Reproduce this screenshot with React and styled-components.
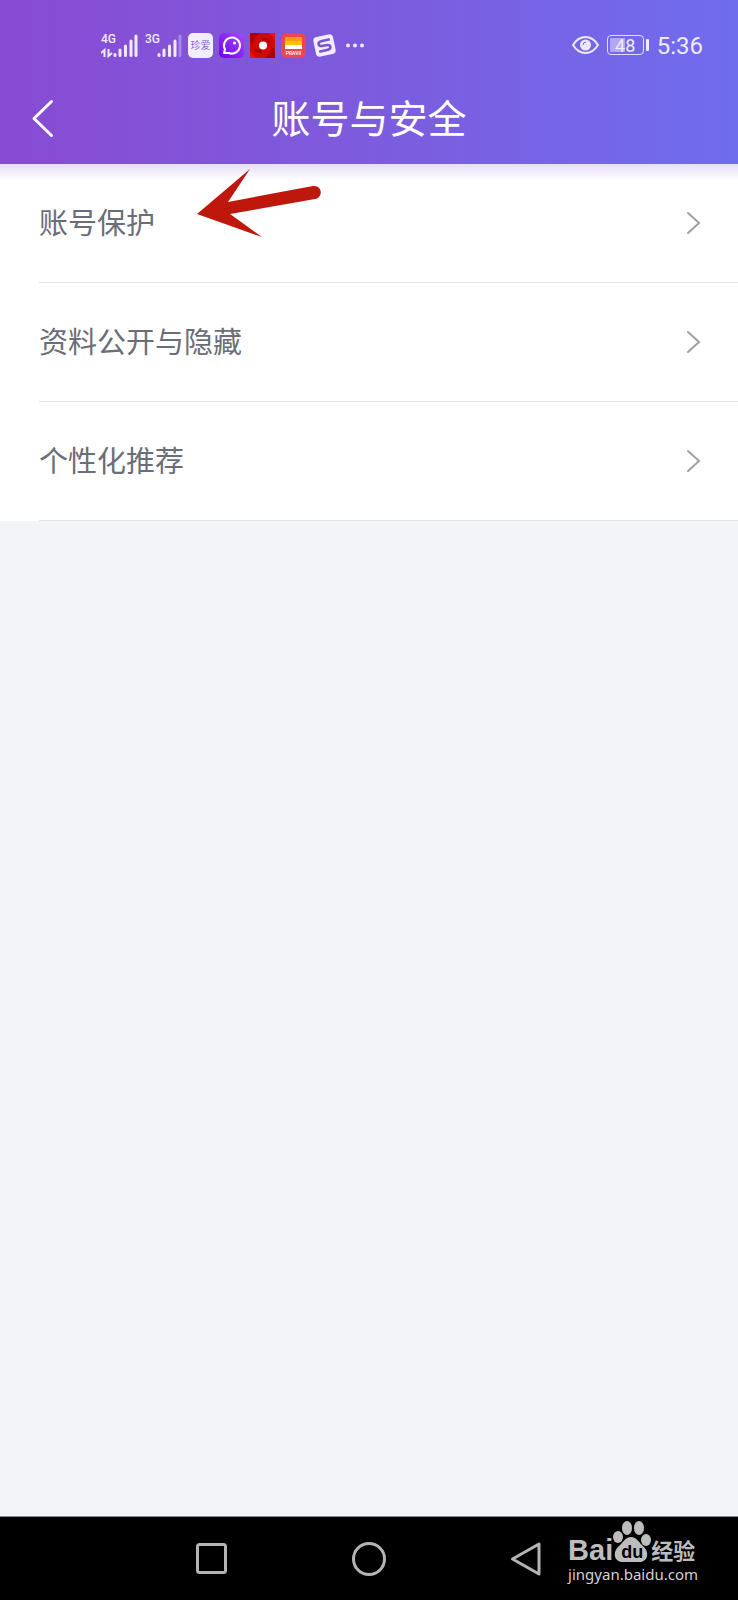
import React from "react";
import styled, { createGlobalStyle } from "styled-components";

const GlobalStyle = createGlobalStyle`
  * { box-sizing: border-box; }
  body {
    margin: 0;
    font-family: Roboto, "Noto Sans CJK SC", sans-serif;
    background: #f3f4f7;
  }
`;

const Page = styled.div`
  display: flex;
  flex-direction: column;
  min-height: 100vh;
`;

const Header = styled.header`
  position: relative;
  background: linear-gradient(90deg, #884bd3 0%, #7e5adc 45%, #706cee 100%);
  color: #fff;
  &::after {
    content: "";
    position: absolute;
    left: 0;
    right: 0;
    top: 100%;
    height: 16px;
    background: linear-gradient(#e5def9, rgba(255, 255, 255, 0));
  }
`;

const StatusBar = styled.div`
  display: flex;
  justify-content: space-between;
  align-items: center;
  height: 74px;
  padding: 16px 35px 0 101px;
  color: #efe9ff;
`;

const StatusGroup = styled.div`
  display: flex;
  align-items: center;
  gap: ${(p) => p.$gap}px;
`;

const Signal = styled.div`
  display: grid;
  width: 37px;
  margin-right: ${(p) => p.$after}px;
  > * {
    grid-area: 1 / 1;
  }
`;

const Network = styled.span`
  font: 500 12px/12px Roboto, sans-serif;
`;

const Svg = styled.svg`
  display: block;
  flex: none;
`;

const AppBadge = styled.span`
  width: 25px;
  height: 25px;
  border-radius: 5px;
  background: #f3eeff;
  color: #8a66d8;
  font-size: 10px;
  line-height: 25px;
  text-align: center;
  white-space: nowrap;
`;

const Battery = styled.div`
  display: flex;
  align-items: center;
  gap: 2px;
  &::after {
    content: "";
    width: 3px;
    height: 12px;
    border-radius: 1px;
    background: #efe9ff;
  }
`;

const BatteryCell = styled.span`
  width: 37px;
  height: 20px;
  border: 1px solid #e4ddff;
  border-radius: 4px;
  background: linear-gradient(90deg, #b3a7f5 48%, transparent 48%) content-box;
  padding: 2px;
  font-size: 18px;
  line-height: 15px;
  text-align: center;
`;

const Clock = styled.time`
  font-size: 24px;
  line-height: 28px;
  padding-top: 2px;
`;

const TitleBar = styled.div`
  display: grid;
  grid-template-columns: 86px 1fr 86px;
  align-items: center;
  height: 90px;
`;

const BackButton = styled.button`
  height: 60px;
  padding: 0 0 0 30px;
  border: 0;
  background: none;
  color: inherit;
`;

const Title = styled.h1`
  margin: 0;
  padding-top: 2px;
  font-size: 39px;
  font-weight: 400;
  line-height: 56px;
  text-align: center;
`;

const Main = styled.main`
  flex: 1;
`;

const List = styled.ul`
  list-style: none;
  margin: 0;
  padding: 0 0 0 39px;
  background: #fff;
`;

const Row = styled.a`
  position: relative;
  display: flex;
  align-items: center;
  justify-content: space-between;
  height: 119px;
  padding-right: 37px;
  border-bottom: 1px solid #e4e4e7;
  color: #6b6d78;
  text-decoration: none;
`;

const RowLabel = styled.span`
  padding-top: 2px;
  font-size: 29px;
  line-height: 40px;
`;

const Pointer = styled.svg`
  position: absolute;
  left: 157px;
  top: 4px;
`;

const NavBar = styled.nav`
  position: relative;
  display: flex;
  height: 84px;
  padding: 0 18%;
  border-top: 1px solid #8b8b8b;
  background: #000;
`;

const NavButton = styled.button`
  flex: 1;
  display: flex;
  align-items: center;
  justify-content: center;
  padding: 0;
  border: 0;
  background: none;
`;

const Watermark = styled.div`
  position: absolute;
  top: 4px;
  right: 40px;
  color: #bdbdbd;
`;

const Brand = styled.div`
  display: flex;
  align-items: flex-end;
  height: 43px;
`;

const BrandLatin = styled.span`
  font: 700 29px/28px "Liberation Sans", sans-serif;
`;

const BrandHan = styled.span`
  font: 700 22px/30px "Noto Sans CJK SC", sans-serif;
`;

const Paw = styled.span`
  display: grid;
  justify-items: center;
  align-items: end;
  > * {
    grid-area: 1 / 1;
  }
`;

const PawText = styled.span`
  color: #000;
  font: 700 18px/24px "Liberation Sans", sans-serif;
`;

const Site = styled.div`
  color: #d2d2d2;
  font: 400 15px/20px "Noto Sans", sans-serif;
`;

function SignalBars({ label, weak, data, after }) {
  return (
    <Signal $after={after}>
      <Network>{label}</Network>
      <Svg width="37" height="25" fill="none" stroke="#efe9ff" strokeWidth="3" strokeLinecap="round">
        <path d="M14 21.500v1M19 17v5.500M24.500 13v9.500M30 8v14.500" />
        <path d="M35 3v19.500" opacity={weak ? 0.35 : 1} />
        {data && <path d="M0 20l3.500-3v7M7.500 16v7l3.500-3" strokeWidth="2" strokeLinecap="butt" />}
      </Svg>
    </Signal>
  );
}

const rows = ["账号保护", "资料公开与隐藏", "个性化推荐"];

export default function App() {
  return (
    <Page>
      <GlobalStyle />
      <Header>
        <StatusBar>
          <StatusGroup $gap={6}>
            <SignalBars label="4G" data after={1} />
            <SignalBars label="3G" weak after={0} />
            <AppBadge>珍爱</AppBadge>
            <Svg width="25" height="25">
              <defs>
                <linearGradient id="chat" x1="0" y1="1" x2="1" y2="0">
                  <stop offset="0" stopColor="#7200ee" />
                  <stop offset="1" stopColor="#a24bff" />
                </linearGradient>
              </defs>
              <rect width="25" height="25" rx="5" fill="url(#chat)" />
              <path d="M5 20l1-3.500a8 8 0 1 1 4 3.500z" fill="none" stroke="#fff" strokeWidth="2" strokeLinejoin="round" />
              <circle cx="15.500" cy="10" r="1.500" fill="#fff" />
            </Svg>
            <Svg width="25" height="25">
              <rect width="25" height="25" fill="#cf0808" />
              <path d="M0 0h10Q3 5 3 12L0 9zM25 25H14q8-4 8-11l3 3zM12 5q7-1 9 6-4-4-9-2zM12 20q-7 1-8-6 3 4 8 2z" fill="#a80404" />
              <path d="M17 0h8v8q-2-6-8-8zM0 17v8h8q-6-2-8-8z" fill="#e81414" />
              <circle cx="13" cy="12.500" r="4" fill="#fff" />
            </Svg>
            <Svg width="25" height="25">
              <rect width="25" height="25" rx="6" fill="#ef4552" />
              <rect x="4" y="4" width="17" height="5" rx="1" fill="#fa9b08" />
              <path d="M4 8h17v4H4z" fill="#ffc400" />
              <path d="M4 12h17v4H4z" fill="#fff" />
              <text x="12.500" y="22" textAnchor="middle" fill="#fff" fontSize="5" fontWeight="500">PRAVII</text>
            </Svg>
            <Svg width="25" height="25">
              <g transform="rotate(-12 12.500 12.500)">
                <rect x="2.500" y="2.500" width="20" height="20" rx="4" fill="#f3edff" />
                <path d="M19 7.500H11q-4 0-4 2.500t4 2.500h3q4 0 4 2.500t-4 2.500H6" fill="none" stroke="#7754d6" strokeWidth="2.500" />
              </g>
            </Svg>
            <Svg width="25" height="25" fill="#efe9ff">
              <circle cx="5" cy="12.500" r="2" />
              <circle cx="12" cy="12.500" r="2" />
              <circle cx="19" cy="12.500" r="2" />
            </Svg>
          </StatusGroup>
          <StatusGroup $gap={8}>
            <Svg width="27" height="20" fill="none" stroke="#efe9ff" strokeWidth="2">
              <path d="M1 10Q6 2 13.500 2T26 10Q21 18 13.500 18T1 10z" />
              <circle cx="13.500" cy="10" r="5.500" fill="#efe9ff" stroke="none" />
              <path d="M11 10a3 3 0 0 1 3-3" stroke="#7565e6" strokeWidth="1" />
            </Svg>
            <Battery>
              <BatteryCell>48</BatteryCell>
            </Battery>
            <Clock>5:36</Clock>
          </StatusGroup>
        </StatusBar>
        <TitleBar>
          <BackButton aria-label="返回">
            <Svg width="26" height="40" fill="none" stroke="#fff" strokeWidth="3" strokeLinecap="round" strokeLinejoin="round">
              <path d="M21.500 2.500L4 19.500 21.500 36.500" />
            </Svg>
          </BackButton>
          <Title>账号与安全</Title>
        </TitleBar>
      </Header>
      <Main>
        <List>
          {rows.map((label, i) => (
            <li key={label}>
              <Row href="#">
                <RowLabel>{label}</RowLabel>
                <Svg width="15" height="24" fill="none" stroke="#a0a0a4" strokeWidth="2" strokeLinecap="round">
                  <path d="M2 2l11 10L2 22" />
                </Svg>
                {i === 0 && (
                  <Pointer width="128" height="72" fill="#bd180b" aria-hidden="true">
                    <path d="M1 46L54 1 32 34 117 18C127 17 127 30 119 31L34 46 66 69z" />
                  </Pointer>
                )}
              </Row>
            </li>
          ))}
        </List>
      </Main>
      <NavBar>
        <NavButton aria-label="最近任务">
          <Svg width="34" height="34" fill="none" stroke="#b5b3b5" strokeWidth="3">
            <rect x="2.500" y="2.500" width="28" height="28" rx="2" />
          </Svg>
        </NavButton>
        <NavButton aria-label="主页">
          <Svg width="36" height="36" fill="none" stroke="#b5b3b5" strokeWidth="3">
            <circle cx="18" cy="18" r="15.500" />
          </Svg>
        </NavButton>
        <NavButton aria-label="返回">
          <Svg width="32" height="36" fill="none" stroke="#b5b3b5" strokeWidth="3" strokeLinejoin="round">
            <path d="M29 3v30L2.500 18z" />
          </Svg>
        </NavButton>
        <Watermark>
          <Brand>
            <BrandLatin>Bai</BrandLatin>
            <Paw>
              <Svg width="38" height="44" fill="#bdbdbd">
                <ellipse cx="5" cy="17" rx="5" ry="6" />
                <ellipse cx="14" cy="8" rx="5" ry="7" />
                <ellipse cx="26" cy="8" rx="5" ry="7" />
                <ellipse cx="33" cy="20" rx="5" ry="6" />
                <path d="M18 17c6 0 8 6 12 9 7 6 5 16-4 16H10C1 42-1 32 6 26c4-3 6-9 12-9z" />
              </Svg>
              <PawText>du</PawText>
            </Paw>
            <BrandHan>经验</BrandHan>
          </Brand>
          <Site>jingyan.baidu.com</Site>
        </Watermark>
      </NavBar>
    </Page>
  );
}
